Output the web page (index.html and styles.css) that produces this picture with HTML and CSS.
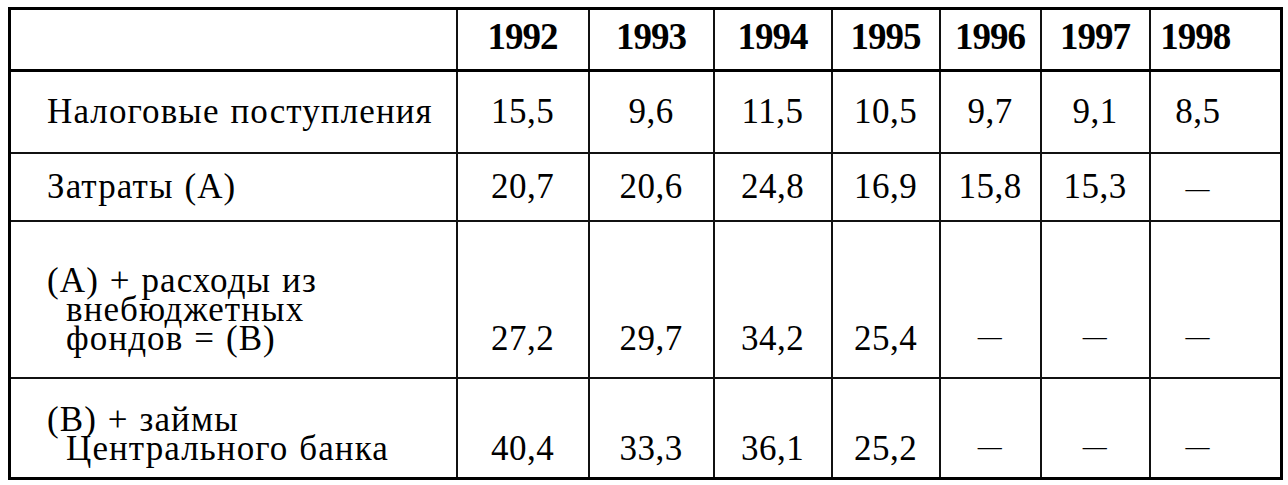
FILE: index.html
```html
<!DOCTYPE html>
<html lang="ru">
<head>
    <meta charset="UTF-8">
    <meta name="viewport" content="width=device-width, initial-scale=1.0">
    <title>Налоги и расходы</title>
    <link rel="stylesheet" href="styles.css">
</head>
<body>
    <table class="budget">
        <colgroup>
            <col class="col-label">
            <col class="col-92">
            <col class="col-93">
            <col class="col-94">
            <col class="col-95">
            <col class="col-96">
            <col class="col-97">
            <col class="col-98">
        </colgroup>
        <thead>
            <tr class="row-head">
                <th></th>
                <th>1992</th>
                <th>1993</th>
                <th>1994</th>
                <th>1995</th>
                <th>1996</th>
                <th>1997</th>
                <th class="last">1998</th>
            </tr>
        </thead>
        <tbody>
            <tr class="row-tax">
                <td class="label">Налоговые поступления</td>
                <td>15,5</td>
                <td>9,6</td>
                <td>11,5</td>
                <td>10,5</td>
                <td>9,7</td>
                <td>9,1</td>
                <td class="last">8,5</td>
            </tr>
            <tr class="row-cost">
                <td class="label">Затраты (А)</td>
                <td>20,7</td>
                <td>20,6</td>
                <td>24,8</td>
                <td>16,9</td>
                <td>15,8</td>
                <td>15,3</td>
                <td class="last"><span class="dash">—</span></td>
            </tr>
            <tr class="row-funds bottom">
                <td class="label">
                    <span class="line">(А) + расходы из</span>
                    <span class="line indent">внебюджетных</span>
                    <span class="line indent">фондов = (В)</span>
                </td>
                <td>27,2</td>
                <td>29,7</td>
                <td>34,2</td>
                <td>25,4</td>
                <td><span class="dash">—</span></td>
                <td><span class="dash">—</span></td>
                <td class="last"><span class="dash">—</span></td>
            </tr>
            <tr class="row-loans bottom">
                <td class="label">
                    <span class="line">(В) + займы</span>
                    <span class="line indent">Центрального банка</span>
                </td>
                <td>40,4</td>
                <td>33,3</td>
                <td>36,1</td>
                <td>25,2</td>
                <td><span class="dash">—</span></td>
                <td><span class="dash">—</span></td>
                <td class="last"><span class="dash">—</span></td>
            </tr>
        </tbody>
    </table>
</body>
</html>
```

FILE: styles.css
```css
* {
    margin: 0;
    padding: 0;
    box-sizing: border-box;
}

body {
    background: #ffffff;
    color: #000000;
    font-family: "Liberation Serif", serif;
    padding: 7px 0 0 8px;
}

.budget {
    width: 1272px;
    table-layout: fixed;
    border-collapse: collapse;
    border: 3px solid #000;
}

.col-label { width: 447px; }
.col-92 { width: 132px; }
.col-93 { width: 125px; }
.col-94 { width: 118px; }
.col-95 { width: 108px; }
.col-96 { width: 101px; }
.col-97 { width: 109px; }
.col-98 { width: 132px; }

th, td {
    border: 2px solid #111;
    text-align: center;
    vertical-align: middle;
    font-family: "Liberation Serif", serif;
    font-size: 35px;
    font-weight: normal;
    letter-spacing: 0.5px;
}

th {
    font-weight: bold;
    font-size: 37px;
    letter-spacing: -1px;
    padding-bottom: 6px;
}

thead tr {
    border-bottom: 3px solid #000;
}

.row-head { height: 62px; }
.row-tax { height: 82px; }
.row-cost { height: 68px; }
.row-funds { height: 157px; }
.row-loans { height: 101px; }

.last {
    padding-right: 35px;
}

th.last {
    padding-right: 40px;
}

.label {
    text-align: left;
    padding-left: 36px;
    word-spacing: 1px;
    letter-spacing: 1.1px;
}

.line {
    display: block;
}

.indent {
    padding-left: 19px;
}

.bottom td {
    vertical-align: bottom;
    line-height: 29px;
    padding-bottom: 14px;
}

.row-funds td {
    padding-bottom: 24px;
}

.dash {
    display: inline-block;
    font-size: 24px;
    transform: translateY(-2px);
}
```
